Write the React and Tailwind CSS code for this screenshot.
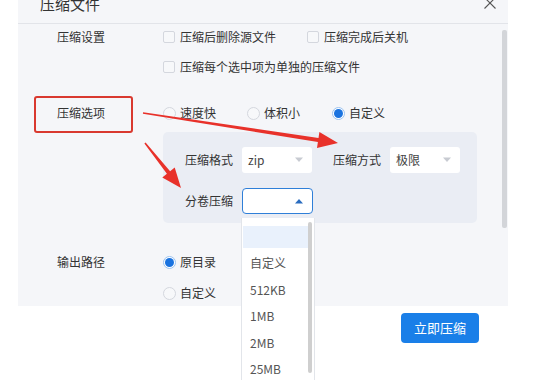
import React from "react";

const Check = ({ label }) => (
  <div className="flex items-center">
    <span className="w-[12px] h-[12px] border border-[#d4d7de] bg-[#f7f8fa] rounded-[2px]" />
    <span className="ml-[5px]">{label}</span>
  </div>
);

const Radio = ({ label, on }) => (
  <div className="flex items-center">
    {on ? (
      <span className="w-[13px] h-[13px] rounded-full border border-[#9cc3f0] bg-white flex items-center justify-center">
        <span className="w-[9px] h-[9px] rounded-full bg-[#1a73e0]" />
      </span>
    ) : (
      <span className="w-[13px] h-[13px] rounded-full border border-[#d4d7de] bg-[#f7f8fa]" />
    )}
    <span className="ml-[4px]">{label}</span>
  </div>
);

const Caret = ({ up, color }) => (
  <svg width="10" height="6" viewBox="0 0 10 6">
    {up ? <path d="M1 5.5 L5 1 L9 5.5 Z" fill={color} /> : <path d="M1 0.5 L5 5 L9 0.5 Z" fill={color} />}
  </svg>
);

export default function App() {
  return (
    <div className="relative w-[550px] h-[380px] bg-white overflow-hidden font-['Noto_Sans_CJK_SC',sans-serif] text-[12px] text-[#333]">
      <div className="ml-[18px] w-[490px] h-[306px] bg-[#f5f6f9] flex flex-col overflow-hidden">
        <div className="h-[24px] shrink-0 border-b border-[#e2e4e9] flex items-start justify-between pl-[22px] pr-[12px]">
          <span className="text-[15px] leading-[16px] -mt-[4px] text-[#333]">压缩文件</span>
          <svg width="12" height="12" viewBox="0 0 12 12" className="-mt-[3px]">
            <path d="M0.5 0.5 L11.5 11.5 M11.5 0.5 L0.5 11.5" stroke="#555" strokeWidth="1.1" />
          </svg>
        </div>
        <div className="flex flex-1 overflow-hidden">
          <div className="flex-1 flex flex-col">
            <div className="flex h-[28px] items-center">
              <div className="w-[145px] pl-[39px] shrink-0">压缩设置</div>
              <div className="flex items-center gap-[31px]">
                <Check label="压缩后删除源文件" />
                <Check label="压缩完成后关机" />
              </div>
            </div>
            <div className="flex h-[28px] items-center mt-[4px]">
              <div className="w-[145px] shrink-0" />
              <Check label="压缩每个选中项为单独的压缩文件" />
            </div>
            <div className="relative flex h-[28px] items-center mt-[21px]">
              <div className="w-[145px] pl-[39px] shrink-0">压缩选项</div>
              <div className="flex items-center">
                <div className="w-[84px]"><Radio label="速度快" /></div>
                <div className="w-[85px]"><Radio label="体积小" /></div>
                <Radio label="自定义" on />
              </div>
              <div className="absolute left-[16px] top-[-4px] w-[99px] h-[37px] border-[2.5px] border-[#d9392f] rounded-[3px]" />
            </div>
            <div className="ml-[145px] mt-[6px] w-[314px] h-[97px] bg-[#eaedf4] rounded-[5px] pl-[22px] pt-[15px] flex flex-col gap-[15px]">
              <div className="flex items-center h-[26px]">
                <span className="w-[57px] shrink-0">压缩格式</span>
                <div className="w-[70px] h-[26px] bg-white rounded-[3px] flex items-center justify-between pl-[6px] pr-[8px]">
                  <span className="text-[#444]">zip</span>
                  <Caret color="#c8cbd2" />
                </div>
                <span className="ml-[21px] w-[57px] shrink-0">压缩方式</span>
                <div className="w-[70px] h-[26px] bg-white rounded-[3px] flex items-center justify-between pl-[6px] pr-[8px]">
                  <span className="text-[#444]">极限</span>
                  <Caret color="#c8cbd2" />
                </div>
              </div>
              <div className="flex items-center h-[26px]">
                <span className="w-[57px] shrink-0">分卷压缩</span>
                <div className="w-[71px] h-[26px] bg-white rounded-[4px] border-[1.5px] border-[#2f7fd8] flex items-center justify-end pr-[8px]">
                  <Caret up color="#2a6cbf" />
                </div>
              </div>
            </div>
            <div className="flex h-[28px] items-center mt-[27px]">
              <div className="w-[145px] pl-[39px] shrink-0">输出路径</div>
              <Radio label="原目录" on />
            </div>
            <div className="flex h-[28px] items-center mt-[5px]">
              <div className="w-[145px] shrink-0" />
              <Radio label="自定义" />
            </div>
          </div>
          <div className="w-[5px] mt-[6px] h-[198px] bg-[#d3d5d9] rounded-[2px] mr-[1px]" />
        </div>
      </div>

      <div className="flex justify-end pr-[71px] mt-[7px]">
        <button className="w-[78px] h-[30px] bg-[#1a7fe8] rounded-[4px] text-white text-[13px]">立即压缩</button>
      </div>

      <div className="absolute left-[241px] top-[218px] w-[74px] h-[170px] bg-white border-l border-r border-[#e2e5ea] flex">
        <div className="flex-1 flex flex-col pt-[8px] pl-[1px]">
          <div className="h-[22px] bg-[#e9f1fc] mb-[2px]" />
          {["自定义", "512KB", "1MB", "2MB", "25MB"].map((t) => (
            <div key={t} className="h-[26.5px] flex items-center pl-[7px] text-[#555]">{t}</div>
          ))}
        </div>
        <div className="w-[4px] mt-[4px] h-[151px] bg-[#cfcfcf] rounded-[2px] mr-[2px]" />
      </div>

      <svg className="absolute left-0 top-0 pointer-events-none" width="550" height="380" viewBox="0 0 550 380">
        <polygon fill="#e8312a" points="143.1,112.3 318.5,138.0 319.4,132.1 338,143 317.0,147.9 317.9,142.0 142.9,113.7" />
        <polygon fill="#e8312a" points="145.6,142.5 170.1,171.15 174.7,167.4 181,188 162.3,177.4 166.9,173.65 144.4,143.5" />
      </svg>
    </div>
  );
}
